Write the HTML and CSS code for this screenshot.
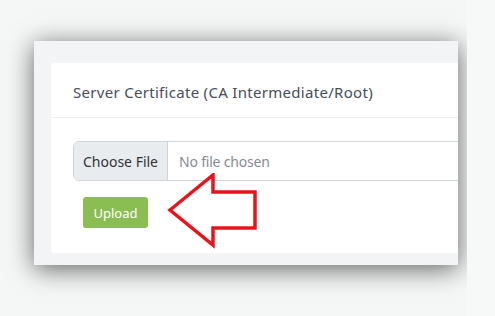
FILE: index.html
```html
<!DOCTYPE html>
<html>
<head>
<meta charset="utf-8">
<link rel="stylesheet" href="styles.css">
</head>
<body>
<div class="stage">
  <div class="window">
    <div class="card">
      <div class="card-header">
        <h2 class="title">Server Certificate (CA Intermediate/Root)</h2>
      </div>
      <div class="card-body">
        <div class="file-input">
          <span class="file-btn">Choose File</span>
          <span class="file-name">No file chosen</span>
        </div>
        <button class="upload">Upload</button>
      </div>
      <svg class="arrow" width="100" height="80" viewBox="0 0 100 80">
        <polygon points="3,35 46,0 46,17 88,17 88,53 46,53 46,70" transform="translate(0,2)" fill="none" stroke="#e8141c" stroke-width="3.5" stroke-linejoin="miter"/>
      </svg>
    </div>
  </div>
</div>
</body>
</html>
```

FILE: styles.css
```css
html, body {
  margin: 0;
  padding: 0;
  background: #f6f9f8;
  font-family: "Noto Sans", "Open Sans", sans-serif;
}
.stage {
  width: 467px;
  height: 316px;
  overflow: hidden;
  background: #f4f7f6;
  padding-top: 41px;
  padding-left: 34px;
  box-sizing: border-box;
}
.window {
  width: 424px;
  height: 224px;
  background: #f3f4f6;
  overflow: hidden;
  box-shadow: 0 4px 24px rgba(0, 0, 0, 0.6);
  padding-top: 22px;
  padding-left: 17px;
  box-sizing: border-box;
}
.card {
  position: relative;
  width: 460px;
  height: 190px;
  background: #ffffff;
  border-radius: 4px;
}
.card-header {
  height: 55px;
  border-bottom: 1px solid #eef0f3;
  padding-left: 22px;
  display: flex;
  align-items: center;
  box-sizing: border-box;
}
.title {
  margin: 0;
  font-size: 15px;
  font-weight: 400;
  letter-spacing: 0.3px;
  color: #474d5a;
  padding-top: 3px;
}
.card-body {
  padding: 23px 0 0 22px;
}
.file-input {
  display: flex;
  height: 40px;
  border: 1px solid #ced4da;
  border-radius: 6px;
  overflow: hidden;
  box-sizing: border-box;
  font-size: 14px;
}
.file-btn {
  width: 93px;
  background: #e9ecef;
  border-right: 1px solid #ced4da;
  color: #2f3338;
  display: flex;
  align-items: center;
  justify-content: center;
}
.file-name {
  display: flex;
  align-items: center;
  padding-left: 11px;
  color: #868c93;
  letter-spacing: -0.2px;
}
.upload {
  display: block;
  margin: 16px 0 0 10px;
  width: 65px;
  height: 31px;
  border: none;
  border-radius: 3px;
  background: #8bbe52;
  color: #ffffff;
  font-family: inherit;
  font-size: 13px;
  padding: 0;
}
.arrow {
  position: absolute;
  left: 116px;
  top: 110px;
}
```
